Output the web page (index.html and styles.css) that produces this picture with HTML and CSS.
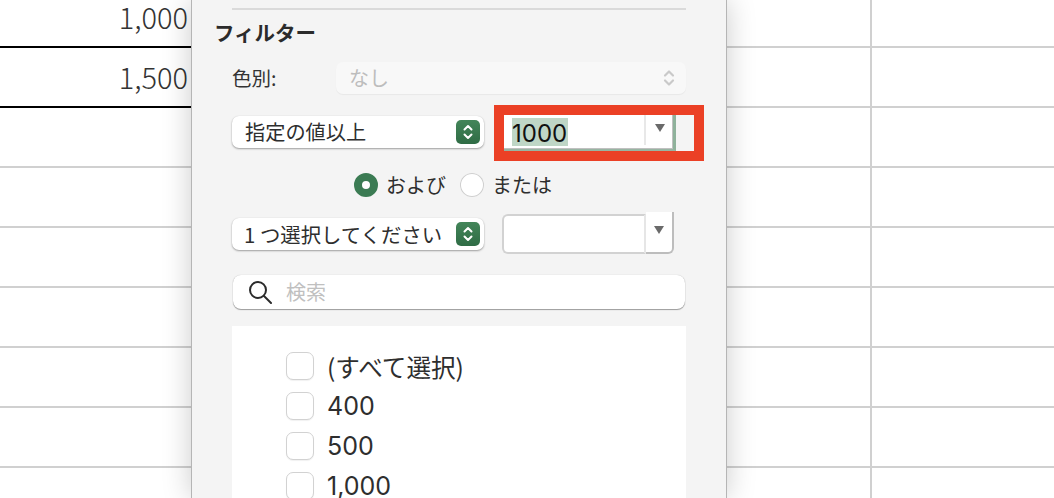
FILE: index.html
```html
<!DOCTYPE html>
<html lang="ja">
<head>
<meta charset="utf-8">
<title>フィルター</title>
<link rel="stylesheet" href="styles.css">
</head>
<body>
<div class="sheet">
  <div class="row total"><div class="cell-a">1,000</div><div class="cell-b"></div><div class="cell-c"></div></div>
  <div class="row total"><div class="cell-a">1,500</div><div class="cell-b"></div><div class="cell-c"></div></div>
  <div class="row"><div class="cell-a"></div><div class="cell-b"></div><div class="cell-c"></div></div>
  <div class="row"><div class="cell-a"></div><div class="cell-b"></div><div class="cell-c"></div></div>
  <div class="row"><div class="cell-a"></div><div class="cell-b"></div><div class="cell-c"></div></div>
  <div class="row"><div class="cell-a"></div><div class="cell-b"></div><div class="cell-c"></div></div>
  <div class="row"><div class="cell-a"></div><div class="cell-b"></div><div class="cell-c"></div></div>
  <div class="row"><div class="cell-a"></div><div class="cell-b"></div><div class="cell-c"></div></div>
  <div class="row"><div class="cell-a"></div><div class="cell-b"></div><div class="cell-c"></div></div>
</div>

<aside class="panel">
  <div class="divider"></div>
  <h2 class="title">フィルター</h2>

  <div class="color-row">
    <span class="color-label">色別:</span>
    <div class="select-disabled">
      <span>なし</span>
      <svg class="chev-disabled" width="12" height="18" viewBox="0 0 12 18" fill="none" stroke="#c9c9c9" stroke-width="2.2" stroke-linecap="round" stroke-linejoin="round"><path d="M2 6.5 6 2.5l4 4"/><path d="M2 11.5l4 4 4-4"/></svg>
    </div>
  </div>

  <div class="cond-row">
    <div class="select">
      <span>指定の値以上</span>
      <span class="stepper"><svg width="12" height="18" viewBox="0 0 12 18" fill="none" stroke="#fff" stroke-width="2" stroke-linecap="round" stroke-linejoin="round"><path d="M2.5 6.5 6 3l3.5 3.5"/><path d="M2.5 11.5 6 15l3.5-3.5"/></svg></span>
    </div>
    <div class="combo-focus">
      <div class="combo-field"><span class="selection">1000</span></div>
      <div class="combo-arrow"><span class="tri"></span></div>
      <div class="annotation"></div>
    </div>
  </div>

  <div class="radio-row">
    <span class="radio on"></span><span class="radio-label">および</span>
    <span class="radio"></span><span class="radio-label">または</span>
  </div>

  <div class="cond-row second">
    <div class="select lower">
      <span>1 つ選択してください</span>
      <span class="stepper"><svg width="12" height="18" viewBox="0 0 12 18" fill="none" stroke="#fff" stroke-width="2" stroke-linecap="round" stroke-linejoin="round"><path d="M2.5 6.5 6 3l3.5 3.5"/><path d="M2.5 11.5 6 15l3.5-3.5"/></svg></span>
    </div>
    <div class="combo">
      <div class="combo-input"></div>
      <div class="combo-btn"><span class="tri"></span></div>
    </div>
  </div>

  <div class="search">
    <svg width="24" height="24" viewBox="0 0 24 24" fill="none" stroke="#2b2b2b" stroke-width="2" stroke-linecap="round"><circle cx="10" cy="10" r="8"/><path d="M16 16l7 7"/></svg>
    <span>検索</span>
  </div>

  <div class="list">
    <div class="item"><span class="check"></span><span class="item-text all">(すべて選択)</span></div>
    <div class="item"><span class="check"></span><span class="item-text">400</span></div>
    <div class="item"><span class="check"></span><span class="item-text">500</span></div>
    <div class="item"><span class="check"></span><span class="item-text">1,000</span></div>
  </div>
</aside>
</body>
</html>
```
FILE: styles.css
```css
* { box-sizing: border-box; }
html, body { margin: 0; padding: 0; height: 100%; overflow: hidden; background: #fff; }
body {
  position: relative;
  width: 1054px;
  height: 498px;
  font-family: Inter, "Noto Sans CJK JP", sans-serif;
  color: #2e2e2e;
}

/* Spreadsheet behind the panel */
.sheet { margin-top: -12px; }
.row { display: flex; height: 60px; }
.cell-a {
  display: flex;
  align-items: center;
  justify-content: flex-end;
  width: 192px;
  padding: 0 4px 3px 0;
  border-bottom: 2px solid #d0d0d0;
  font: 300 29px/34px "Noto Sans CJK JP", sans-serif;
  color: #333;
}
.total .cell-a { border-bottom-color: #000; }
.cell-b { width: 680px; border-bottom: 2px solid #d0d0d0; border-right: 2px solid #d0d0d0; }
.cell-c { flex: 1; border-bottom: 2px solid #d0d0d0; }

/* Floating filter panel */
.panel {
  position: absolute;
  left: 192px;
  top: 0;
  width: 534px;
  height: 498px;
  background: #f4f4f4;
  outline: 1px solid #b5b5b5;
  box-shadow: 0 0 28px rgba(0, 0, 0, .22);
  clip-path: inset(0 -60px 0 -60px);
}
.divider { height: 2px; width: 454px; margin: 8px 0 0 40px; background: #dadada; }
.title {
  margin: 8px 0 0 22px;
  font: 700 20.5px/28px "Noto Sans CJK JP", sans-serif;
  color: #2b2b2b;
}

.color-row { display: flex; align-items: center; height: 32px; margin: 16px 0 0 40px; }
.color-label { width: 104px; font: 19.5px/32px "Noto Sans CJK JP", sans-serif; color: #333; }
.select-disabled {
  display: flex;
  align-items: center;
  justify-content: space-between;
  width: 350px;
  height: 32px;
  padding: 0 11px 0 13px;
  border-radius: 7px;
  background: #f8f8f8;
  box-shadow: 0 1px 1px rgba(0, 0, 0, .05);
  font: 20px/32px "Noto Sans CJK JP", sans-serif;
  color: #bdbdbd;
}

.cond-row { display: flex; align-items: flex-start; gap: 18px; margin: 22px 0 0 40px; height: 35px; }
.cond-row.second { margin-top: 15px; height: 42px; }
.select {
  display: flex;
  align-items: center;
  justify-content: space-between;
  width: 252px;
  height: 32px;
  padding: 0 4px 0 13px;
  border-radius: 7px;
  background: #fff;
  box-shadow: 0 1px 2px rgba(0, 0, 0, .35), 0 0 1px rgba(0, 0, 0, .12);
  font: 20.2px/32px "Noto Sans CJK JP", sans-serif;
  color: #2e2e2e;
  white-space: nowrap;
}
.select.lower { margin-top: 6px; padding-left: 12px; font-size: 20.4px; }
.stepper {
  display: flex;
  align-items: center;
  justify-content: center;
  width: 24px;
  height: 24px;
  border-radius: 5px;
  background: linear-gradient(#438559, #2f6c45);
}

.combo-focus {
  position: relative;
  display: flex;
  width: 174px;
  height: 36px;
  margin-top: -1px;
  background: #fff;
  border-right: 3px solid #8fb29b;
  border-bottom: 2px solid #98b5a2;
  box-shadow: inset -1px -1px 0 #c0c0c0;
}
.combo-field { flex: 1; padding: 3px 0 0 10px; border-right: 2px solid #e8e8e8; margin-bottom: 4px; }
.selection { display: inline-block; width: 56px; height: 28px; padding-top: 2px; background: #bfd6c6; font: 24px/27px Inter, sans-serif; color: #111; }
.combo-arrow { display: flex; justify-content: center; width: 27px; padding-top: 9px; }
.tri { width: 0; height: 0; border-left: 5px solid transparent; border-right: 5px solid transparent; border-top: 8px solid #6a6a6a; }
.annotation {
  position: absolute;
  left: -8px;
  top: -10px;
  width: 210px;
  height: 56px;
  border: 10px solid #eb4025;
}

.radio-row { display: flex; align-items: center; height: 24px; margin: 22px 0 0 162px; }
.radio {
  width: 24px;
  height: 24px;
  border-radius: 50%;
  background: #fff;
  box-shadow: inset 0 0 0 1px #cfcfcf;
}
.radio.on { background: #fff; box-shadow: none; border: 8px solid #3b7b53; }
.radio-label { margin: 0 8px; font: 20px/24px "Noto Sans CJK JP", sans-serif; color: #2e2e2e; }
.radio-label:nth-child(2) { margin-right: 14px; }

.combo { display: flex; width: 172px; height: 42px; }
.combo-input {
  flex: 1;
  margin-top: 2px;
  background: #fff;
  border: 2px solid #d2d2d2;
  border-right: 2px solid #e6e6e6;
  border-radius: 6px 0 0 6px;
}
.combo-btn {
  display: flex;
  justify-content: center;
  width: 28px;
  padding-top: 14px;
  background: #fff;
  border-right: 2px solid #bdbdbd;
  border-bottom: 2px solid #bdbdbd;
  border-radius: 0 0 6px 0;
}

.search {
  display: flex;
  align-items: center;
  gap: 14px;
  width: 452px;
  height: 34px;
  margin: 21px 0 0 41px;
  padding-left: 15px;
  border-radius: 8px;
  background: #fff;
  box-shadow: 0 1px 1px rgba(0, 0, 0, .35), 0 0 1px rgba(0, 0, 0, .25);
  font: 20px/34px "Noto Sans CJK JP", sans-serif;
  color: #c0c0c0;
}

.list { width: 454px; height: 172px; margin: 17px 0 0 40px; padding: 20px 0 0 54px; background: #fff; }
.item { display: flex; align-items: center; height: 40px; gap: 13px; }
.check {
  flex: none;
  width: 28px;
  height: 28px;
  border-radius: 7px;
  background: #fff;
  border: 1px solid #d2d2d2;
  box-shadow: 0 1px 1px rgba(0, 0, 0, .06);
}
.item-text { font: 25px/30px Inter, "Noto Sans CJK JP", sans-serif; color: #2e2e2e; }
.item-text.all { font-family: "Noto Sans CJK JP", sans-serif; font-size: 24.6px; }
```
